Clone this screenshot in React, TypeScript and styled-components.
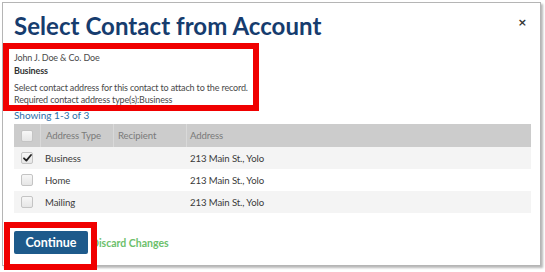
import React from "react";
import styled, { createGlobalStyle } from "styled-components";

const Global = createGlobalStyle`
  html, body { margin: 0; padding: 0; background: #ffffff; }
  body { font-family: Lato, "Open Sans", sans-serif; }
`;

const Page = styled.div`
  position: relative;
  width: 545px;
  height: 272px;
  overflow: hidden;
`;

const Dialog = styled.div`
  box-sizing: border-box;
  margin: 2px 0 0 2px;
  width: 539px;
  height: 264px;
  border: 1px solid #b5b5b5;
  box-shadow: 2px 2px 2px rgba(0, 0, 0, 0.28);
  background: #fff;
  padding: 8px 9px 0 11px;
  display: flex;
  flex-direction: column;
`;

const TitleRow = styled.div`
  display: flex;
  justify-content: space-between;
  align-items: flex-start;
`;

const Title = styled.h1`
  margin: 0;
  font-family: Lato, sans-serif;
  font-weight: 700;
  font-size: 24px;
  line-height: 30px;
  color: #163c6e;
  letter-spacing: 0.05px;
`;

const Close = styled.button`
  border: 0;
  background: none;
  padding: 0;
  margin: 6px 4px 0 0;
  font-family: "DejaVu Sans", sans-serif;
  font-weight: 700;
  font-size: 11px;
  line-height: 12px;
  color: #333;
  cursor: pointer;
`;

const Info = styled.div`
  margin-top: 10px;
  font-size: 9px;
  letter-spacing: -0.15px;
  color: #4a4a4a;
`;

const Line = styled.div<{ $bold?: boolean; $gap?: number }>`
  line-height: ${(p) => (p.$bold !== undefined ? 13 : 12)}px;
  font-weight: ${(p) => (p.$bold ? 700 : 400)};
  margin-top: ${(p) => p.$gap ?? 0}px;
  color: ${(p) => (p.$bold ? "#333" : "#4a4a4a")};
`;

const Showing = styled.div`
  margin-top: 3px;
  font-size: 10px;
  line-height: 12px;
  color: #2a6ea8;
`;

const Table = styled.div`
  margin-top: 3px;
  width: 517px;
  font-size: 9.6px;
  letter-spacing: -0.1px;
`;

const Row = styled.div<{ $variant: "head" | "shade" | "plain" }>`
  display: grid;
  grid-template-columns: 26px 73px 73px 1fr;
  height: ${(p) => (p.$variant === "head" ? 23 : 22)}px;
  align-items: stretch;
  background: ${(p) =>
    p.$variant === "head" ? "#cccccc" : p.$variant === "shade" ? "#f4f4f4" : "#ffffff"};
  color: ${(p) => (p.$variant === "head" ? "#7a7a7a" : "#3a3a3a")};
`;

const Cell = styled.div<{ $divider?: boolean; $pad?: number }>`
  display: flex;
  align-items: center;
  padding-left: ${(p) => p.$pad ?? 5}px;
  border-left: ${(p) => (p.$divider ? "1px solid #d9d9d9" : "0")};
  white-space: nowrap;
`;

const CheckCell = styled.div`
  display: flex;
  align-items: center;
  justify-content: center;
`;

const Box = styled.span`
  box-sizing: border-box;
  width: 12px;
  height: 12px;
  border: 1px solid #c4c4c4;
  border-radius: 2px;
  background: linear-gradient(#f7f7f7, #e6e6e6);
  display: flex;
  align-items: center;
  justify-content: center;
`;

const Footer = styled.div`
  margin-top: 18px;
  display: flex;
  align-items: center;
  gap: 3px;
`;

const Primary = styled.button`
  box-sizing: border-box;
  width: 74px;
  height: 23px;
  border: 0;
  border-radius: 2px;
  background: #1d5a8b;
  color: #fff;
  font-family: Lato, sans-serif;
  font-weight: 700;
  font-size: 12.5px;
  padding: 0;
`;

const LinkButton = styled.button`
  border: 0;
  background: none;
  padding: 0;
  font-family: Lato, sans-serif;
  font-weight: 700;
  font-size: 10.5px;
  color: #6cc06b;
`;

const Highlight = styled.div<{ $l: number; $t: number; $w: number; $h: number }>`
  position: absolute;
  left: ${(p) => p.$l}px;
  top: ${(p) => p.$t}px;
  width: ${(p) => p.$w}px;
  height: ${(p) => p.$h}px;
  box-sizing: border-box;
  border: 6px solid #f00000;
  pointer-events: none;
`;

const Check = () => (
  <svg width="9" height="8" viewBox="0 0 9 8">
    <path d="M1 4.3 L3.4 6.6 L8 1" fill="none" stroke="#222" strokeWidth="1.8" strokeLinecap="round" strokeLinejoin="round" />
  </svg>
);

const rows = [
  { type: "Business", checked: true, variant: "shade" as const },
  { type: "Home", checked: false, variant: "plain" as const },
  { type: "Mailing", checked: false, variant: "shade" as const },
];

export default function App() {
  return (
    <Page>
      <Global />
      <Dialog>
        <TitleRow>
          <Title>Select Contact from Account</Title>
          <Close aria-label="Close">×</Close>
        </TitleRow>
        <Info>
          <Line $bold={false}>John J. Doe &amp; Co. Doe</Line>
          <Line $bold>Business</Line>
          <Line $gap={5}>Select contact address for this contact to attach to the record.</Line>
          <Line>Required contact address type(s):Business</Line>
        </Info>
        <Showing>Showing 1-3 of 3</Showing>
        <Table>
          <Row $variant="head">
            <CheckCell>
              <Box />
            </CheckCell>
            <Cell $divider $pad={5}>Address Type</Cell>
            <Cell $divider $pad={4}>Recipient</Cell>
            <Cell $divider $pad={3}>Address</Cell>
          </Row>
          {rows.map((r) => (
            <Row key={r.type} $variant={r.variant}>
              <CheckCell>
                <Box>{r.checked && <Check />}</Box>
              </CheckCell>
              <Cell $pad={5}>{r.type}</Cell>
              <Cell $pad={4}></Cell>
              <Cell $pad={4}>213 Main St., Yolo</Cell>
            </Row>
          ))}
        </Table>
        <Footer>
          <Primary>Continue</Primary>
          <LinkButton>Discard Changes</LinkButton>
        </Footer>
      </Dialog>
      <Highlight $l={3} $t={43} $w={256} $h={68} />
      <Highlight $l={4} $t={222} $w={93} $h={48} />
    </Page>
  );
}
